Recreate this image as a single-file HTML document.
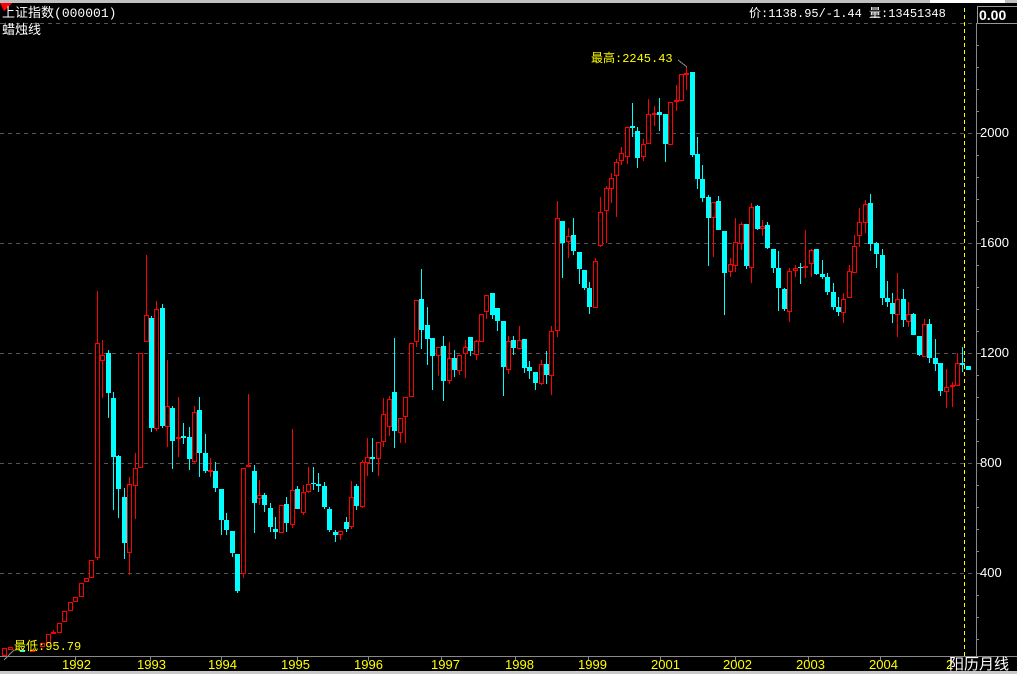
<!DOCTYPE html>
<html><head><meta charset="utf-8"><style>
html,body{margin:0;padding:0;background:#000;width:1017px;height:674px;overflow:hidden}
body{position:relative;font-family:"Liberation Sans","Noto Sans CJK SC",sans-serif}
.t{position:absolute;white-space:nowrap;font-size:12px;line-height:14px}
.w{color:#fff}.y{color:#ff0}
.mono{font-family:"Liberation Mono","Noto Sans CJK SC",monospace}
</style></head><body>
<svg id="s" width="1017" height="674" style="position:absolute;left:0;top:0" shape-rendering="crispEdges">
<rect x="0" y="0" width="1017" height="3" fill="#c0c0c0"/>
<rect x="930" y="0" width="75" height="3" fill="#fff"/>
<g stroke="#555" stroke-dasharray="4,4" stroke-width="1">
<line x1="0" y1="23.5" x2="976" y2="23.5"/>
<line x1="0" y1="133.5" x2="976" y2="133.5"/>
<line x1="0" y1="243.5" x2="976" y2="243.5"/>
<line x1="0" y1="353.5" x2="976" y2="353.5"/>
<line x1="0" y1="463.5" x2="976" y2="463.5"/>
<line x1="0" y1="573.5" x2="976" y2="573.5"/>
</g>
<line x1="976.5" y1="23" x2="976.5" y2="656" stroke="#888"/>
<line x1="0" y1="656.5" x2="1017" y2="656.5" stroke="#888"/>
<rect x="0" y="671" width="1017" height="3" fill="#c8c8c8"/>
<line x1="964.5" y1="8" x2="964.5" y2="656" stroke="#ff0" stroke-dasharray="4,3"/>
<rect x="977.5" y="6.5" width="40" height="17" fill="#000" stroke="#999"/>
<g id="ticks" stroke="#888"></g>
<g id="c"></g>
<line x1="678" y1="60" x2="687" y2="67" stroke="#888"/>
<line x1="4" y1="660" x2="14" y2="650" stroke="#888"/>
<polygon points="0,3 12,3 4,11" fill="#f00"/>
</svg>
<div class="t w" style="left:2px;top:6px;font-size:13px">上证指数<span class="mono">(000001)</span></div>
<div class="t w" style="left:2px;top:23px;font-size:13px">蜡烛线</div>
<div class="t w mono" style="left:749px;top:7px">价:1138.95/-1.44 量:13451348</div>
<div class="t w" style="left:979px;top:7px;font-weight:bold;font-size:14px;line-height:16px">0.00</div>
<div class="t w" style="left:980px;top:126px;font-size:13px">2000</div>
<div class="t w" style="left:980px;top:236px;font-size:13px">1600</div>
<div class="t w" style="left:980px;top:346px;font-size:13px">1200</div>
<div class="t w" style="left:980px;top:456px;font-size:13px">800</div>
<div class="t w" style="left:980px;top:566px;font-size:13px">400</div>
<div class="t y mono" style="left:591px;top:52px">最高:2245.43</div>
<div class="t y mono" style="left:14px;top:640px">最低:95.79</div>
<div class="t y" style="left:62px;top:658px;font-size:13px">1992</div>
<div class="t y" style="left:137px;top:658px;font-size:13px">1993</div>
<div class="t y" style="left:208px;top:658px;font-size:13px">1994</div>
<div class="t y" style="left:281px;top:658px;font-size:13px">1995</div>
<div class="t y" style="left:354px;top:658px;font-size:13px">1996</div>
<div class="t y" style="left:431px;top:658px;font-size:13px">1997</div>
<div class="t y" style="left:505px;top:658px;font-size:13px">1998</div>
<div class="t y" style="left:578px;top:658px;font-size:13px">1999</div>
<div class="t y" style="left:651px;top:658px;font-size:13px">2001</div>
<div class="t y" style="left:723px;top:658px;font-size:13px">2002</div>
<div class="t y" style="left:796px;top:658px;font-size:13px">2003</div>
<div class="t y" style="left:869px;top:658px;font-size:13px">2004</div>
<div class="t y" style="left:946px;top:658px;font-size:13px">2</div>
<div class="t w" style="left:949px;top:656px;font-size:15px;line-height:17px">阳历</div>
<div class="t w" style="left:979px;top:656px;font-size:15px;line-height:17px">月线</div>
<script>
var D=[[4,648,656,648,656,1],[10,647,650,647,650,1],[22,650,652,650,652,0],[32,650,652,650,652,1],[42,643,647,643,647,1],[48,634,643,634,643,1],[53,632,633,630,633,1],[59,623,633,623,633,1],[64,611,622,611,622,1],[70,602,611,602,611,1],[75,597,602,597,602,1],[81,583,597,583,597,1],[86,578,582,578,582,1],[91,560,578,560,578,1],[97,343,558,291,560,1],[102,355,361,340,398,1],[108,353,393,350,418,0],[113,398,457,392,510,0],[118,456,489,455,518,0],[124,497,543,488,559,0],[129,484,553,477,575,1],[135,468,486,453,519,1],[140,353,468,353,468,1],[146,315,342,255,342,1],[151,318,428,316,432,0],[156,309,429,301,431,1],[162,308,426,304,428,0],[167,406,427,360,447,1],[172,408,441,406,469,0],[178,437,439,397,457,1],[183,436,438,423,444,0],[189,437,459,427,470,0],[194,412,462,406,464,1],[199,410,453,397,477,0],[205,453,471,434,473,0],[210,470,471,458,477,1],[215,471,488,462,492,0],[221,489,520,489,535,0],[226,520,530,513,535,0],[232,531,553,531,557,0],[237,554,591,554,593,0],[243,468,574,468,578,1],[248,465,467,394,467,1],[254,471,503,465,533,0],[259,495,499,480,505,1],[264,495,505,493,512,0],[270,508,527,503,532,0],[275,529,532,517,539,0],[281,505,533,505,533,1],[286,504,523,497,532,0],[292,490,525,429,528,1],[297,489,509,486,509,0],[303,492,513,485,515,1],[308,484,492,467,493,1],[313,483,484,467,490,0],[318,484,486,473,492,0],[324,486,507,482,509,0],[329,509,530,507,532,0],[335,532,535,530,542,0],[340,531,535,531,540,1],[346,522,529,517,532,0],[351,497,527,481,529,1],[356,486,506,484,510,0],[362,462,507,460,508,1],[367,457,463,438,476,1],[372,457,459,438,472,0],[378,442,459,442,476,1],[383,414,442,398,447,1],[389,399,427,396,436,1],[394,392,431,338,448,0],[400,418,433,418,443,1],[405,397,417,397,443,1],[411,343,397,343,397,1],[416,300,342,300,347,1],[421,299,330,269,349,0],[427,325,339,307,365,0],[432,338,356,338,390,0],[438,347,356,347,376,1],[443,346,381,336,401,0],[449,358,381,342,384,1],[454,358,370,350,377,0],[459,355,371,355,375,1],[465,347,354,340,378,1],[470,337,351,337,356,0],[476,341,355,340,360,1],[481,314,342,314,342,1],[486,295,312,295,319,1],[492,293,315,293,319,0],[497,308,321,308,331,0],[503,321,367,321,396,0],[508,341,370,336,374,1],[513,340,348,336,355,0],[519,340,349,326,349,1],[524,339,368,339,373,0],[529,367,371,361,379,0],[535,372,383,372,390,0],[541,364,384,360,385,1],[546,364,375,351,384,0],[551,331,376,326,395,1],[557,218,331,201,337,1],[562,221,243,221,278,0],[568,236,242,228,258,1],[573,235,251,218,255,0],[579,252,269,252,284,0],[584,270,288,270,290,0],[589,288,307,282,314,0],[595,261,308,258,308,1],[600,212,246,197,247,1],[606,188,211,186,243,1],[611,178,189,173,203,1],[616,162,176,159,217,1],[621,153,161,147,165,1],[627,127,157,127,164,1],[632,126,128,103,137,0],[637,131,158,127,168,0],[643,144,157,139,161,1],[648,114,144,99,144,1],[654,113,114,106,126,1],[659,112,115,98,131,0],[665,114,144,114,162,0],[670,102,145,102,145,1],[676,100,102,85,111,1],[681,74,101,74,101,1],[686,73,75,67,90,1],[692,72,155,72,157,0],[697,154,179,137,189,0],[702,179,198,165,202,0],[708,197,218,195,266,0],[713,202,218,202,257,1],[718,201,230,196,230,0],[724,231,273,231,315,0],[730,264,272,258,277,1],[735,242,266,218,272,1],[741,224,244,222,250,1],[746,224,266,224,269,0],[751,207,268,203,283,1],[757,206,229,205,230,0],[762,226,229,220,236,1],[767,225,248,222,249,0],[773,249,268,249,273,0],[778,268,288,251,311,0],[784,289,309,288,311,0],[789,271,312,268,322,1],[795,268,271,265,277,1],[800,267,268,263,284,0],[805,266,267,230,278,1],[811,250,264,249,277,1],[816,249,274,249,275,0],[822,274,277,260,279,0],[827,277,292,273,295,0],[833,292,307,283,310,0],[838,307,312,297,316,0],[843,299,313,293,323,1],[849,271,298,265,298,1],[854,246,273,235,273,1],[859,222,236,208,247,1],[865,204,223,200,233,1],[870,203,244,194,251,0],[876,243,254,242,268,0],[882,255,298,249,305,0],[887,298,302,281,307,0],[892,303,314,293,323,0],[897,299,315,273,337,1],[903,299,320,289,327,0],[908,314,322,302,327,1],[913,314,335,313,335,0],[919,336,355,336,356,0],[924,324,357,319,357,1],[929,324,358,319,363,0],[935,358,364,339,371,0],[940,363,391,363,396,0],[946,387,392,369,408,1],[952,385,387,382,407,1],[957,363,386,353,386,1],[962,363,365,347,372,0],[968,366,370,366,370,0]];
var ns="http://www.w3.org/2000/svg",g=document.getElementById("c");
function el(n,a){var e=document.createElementNS(ns,n);for(var k in a)e.setAttribute(k,a[k]);g.appendChild(e);return e;}
D.forEach(function(d){var x=d[0],t=d[1],b=d[2],h=d[3],l=d[4],r=d[5];var col=r?"#ff0000":"#00ffff";
if(b-t<1)b=t+1;
if(h<t)el("line",{x1:x+.5,y1:h,x2:x+.5,y2:t,stroke:col});
if(l>b)el("line",{x1:x+.5,y1:b,x2:x+.5,y2:l,stroke:col});
if(r){el("rect",{x:x-1.5,y:t+.5,width:4,height:Math.max(b-t-1,1),fill:"#000",stroke:col,"stroke-width":1.2});}
else el("rect",{x:x-2,y:t,width:5,height:b-t,fill:col});});
var tk=document.getElementById("ticks"),s="";
for(var y=23;y<=656;y+=22){var e=document.createElementNS(ns,"line");e.setAttribute("x1",977);e.setAttribute("x2",(y-23)%110==0?981:979);e.setAttribute("y1",y+.5);e.setAttribute("y2",y+.5);tk.appendChild(e);}
[75,150,221,297,368,441,515,588,660,735,808,880,951].forEach(function(x){var e=document.createElementNS(ns,"line");e.setAttribute("x1",x+.5);e.setAttribute("x2",x+.5);e.setAttribute("y1",657);e.setAttribute("y2",661);tk.appendChild(e);});
</script>
</body></html>
